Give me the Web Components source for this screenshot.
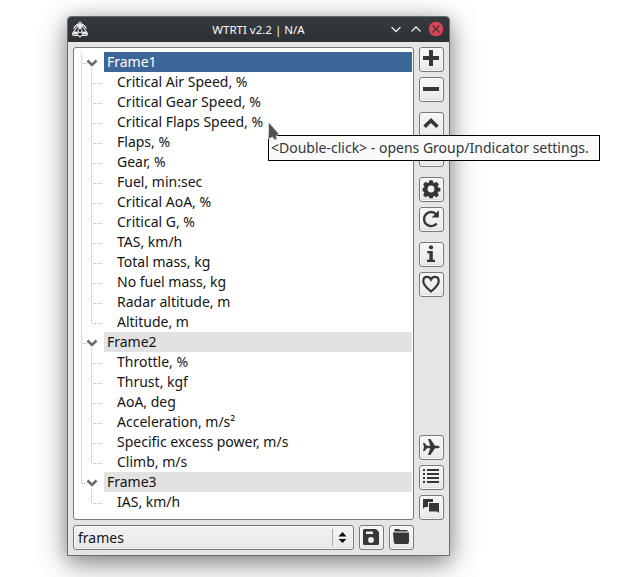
<!DOCTYPE html>
<html lang="en"><head><meta charset="utf-8"><title>WTRTI</title>
<style>
html,body{margin:0;width:622px;height:577px;overflow:hidden;background:#fff}
body{font:14px/20px "Noto Sans",sans-serif;color:#141414}
</style></head><body>
<wt-window caption="WTRTI v2.2 | N/A"></wt-window>
<wt-tooltip>&lt;Double-click&gt; - opens Group/Indicator settings.</wt-tooltip>
<script>
const define=(name,build)=>customElements.define(name,class extends HTMLElement{
  connectedCallback(){if(!this.shadowRoot)this.attachShadow({mode:'open'}).innerHTML=build(this);}
});
const icons={
 plus:'<path d="M10 3h4v6h6v4h-6v6h-4v-6H4V9h6z"/>',
 minus:'<path d="M4 10h16v4H4z"/>',
 up:'<path d="M4.3 13.6 12 6l7.7 7.6-2.6 2.5-5.1-5-5.1 5z"/>',
 down:'<path d="M4.3 9.4 12 17l7.7-7.6-2.6-2.5-5.1 5-5.1-5z"/>',
 gear:'<path fill-rule="evenodd" d="m10.3 4 3.4 0 .5 2.3 1.3.6 2-1.3 2.4 2.4-1.3 2 .5 1.3 2.3.4v3.4l-2.3.5-.5 1.2 1.3 2-2.4 2.4-2-1.3-1.3.5-.5 1.6h-3.4l-.5-1.6-1.3-.5-2 1.3L4.100 18.800l1.300-2-.5-1.200L3.600 15.100v-3.400l1.300-.4.5-1.300-1.300-2L6.500 5.600l2 1.300 1.300-.6zM12 9.400a3.400 3.400 0 1 0 0 6.800 3.400 3.400 0 1 0 0-6.800z" transform="translate(0 -.8)"/>',
 reload:'<path d="M17.3 7.200A7.100 7.100 0 1 0 17.700 16.500" fill="none" stroke="#363636" stroke-width="2.300"/><path d="M19.900 3.300v7.300h-7.300z"/>',
 info:'<circle cx="12" cy="5.300" r="2.100"/><path d="M8.200 9h5.600v8.700H16V20H8v-2.300h2.400V11.200H8.200z"/>',
 heart:'<path d="M12 19.500C8 16.200 4.300 12.700 4.300 9.200c0-5.600 5.800-5.500 7.700-1.700 1.900-3.800 7.700-3.900 7.700 1.700 0 3.500-3.700 7-7.700 10.300z" fill="none" stroke="#363636" stroke-width="2.200"/>',
 plane:'<path d="M4 8h1.600l2.300 2.800 3.400-.1L9 4h2.400l4.600 6.700h2.600c1.100 0 2 .5 2 1.300s-.9 1.300-2 1.300H16L11.400 20H9l2.300-6.700-3.400-.1L5.600 16H4l1-4z"/>',
 list:'<path d="M4 4h2v2H4zM8 4h12v2H8zM4 8h2v2H4zM8 8h12v2H8zM4 12h2v2H4zM8 12h12v2H8zM4 16h2v2H4zM8 16h12v2H8z"/>',
 chat:'<path d="M4 4h10v3H9v5H6l-2 2z"/><path d="M10 8h10v10l-2-1.500h-8z"/>',
 save:'<path fill-rule="evenodd" d="M5.500 4H17l3 3v11.500q0 1.500-1.500 1.500h-13Q4 20 4 18.500v-13Q4 4 5.500 4zM7 6.500V9h7V6.500zm5 5.500a2.900 2.900 0 1 0 0 5.800 2.900 2.900 0 1 0 0-5.800z"/>',
 folder:'<path d="M5.500 6V4H10l1 1h7.500v1.500h-13zM4 7.500h16V17q0 2-2 2H6.500q-1.500 0-1.700-2z"/>'
};
define('wt-button',e=>`<style>:host{display:block;box-sizing:border-box;width:25px;height:25px;border:1px solid #77797a;border-radius:3px;background:linear-gradient(#f7f7f7,#e9e9e9);box-shadow:inset 0 0 0 1px #f8f8f8,inset 0 -2px #dedede}svg{display:block;margin:-1px 0 0 -1px;fill:#363636}</style><svg width="25" height="25" viewBox="0 0 25 25">${icons[e.getAttribute('icon')]}</svg>`);

define('wt-titlebar',()=>`<style>
:host{display:grid;grid-template-columns:76px 1fr 76px;height:25px;align-items:center;background:linear-gradient(#353a3f,#2c3135);border-radius:3px 3px 0 0;color:#fcfcfc;font:11.500px/24px "Noto Sans",sans-serif;text-align:center}
svg{display:block}.controls{justify-self:end}.name{letter-spacing:0}</style>
<svg width="24" height="25" viewBox="0 0 24 25"><path d="M12 5c2 1 2.500 3 3 5l4.200 6q1 2-1.500 2.500l-3.700-.3L12 20l-2-1.800-3.700.3Q3.800 18 4.800 16L9 10c.5-2 1-4 3-5z" fill="#25292c" stroke="#eee" stroke-width="1.100"/><path d="M5.500 12q1-4 4.500-5M14 7q3.500 1 4.500 5M6 15h4v2H5.500zM14 15h4l.5 2H14zM10.600 7h2.800v4h-2.800z" fill="#eee" stroke="#eee" stroke-width=".9"/><circle cx="12" cy="13.500" r="2" fill="#25292c" stroke="#fff"/></svg>
<span class="name"><slot></slot></span>
<svg class="controls" width="62" height="25" viewBox="0 0 62 25"><g fill="none" stroke="#e8e8e8" stroke-width="1.250"><path d="m4.500 10 4.500 4.500 4.500-4.500M24.500 14.500 29 10l4.500 4.500"/></g><circle cx="49" cy="12" r="7.300" fill="#da4453"/><path d="m45.500 8.500 7 7m0-7-7 7" stroke="#31363b" stroke-width="1.200"/></svg>`);

define('wt-item',()=>`<style>:host{display:grid;grid-template-columns:12px 1fr;height:20px;line-height:20px;padding-left:17px;white-space:nowrap}
i{height:1px;margin:11px 0 0 1px;background:repeating-linear-gradient(90deg,transparent 0 1px,#bdbdbd 1px 2px)}span{padding-left:14px}</style><i></i><span><slot></slot></span>`);

define('wt-group',e=>`<style>:host{display:block}
.head{display:grid;grid-template-columns:30px 1fr;height:20px}
.mark{display:block}.name{background:#e2e2e2;padding-left:3px}
:host([selected]) .name{background:#3d6698;color:#fff}
.kids{display:block;background:repeating-linear-gradient(#bdbdbd 0 1px,transparent 1px 2px) 17px 0/1px calc(100% - 8px) no-repeat}
.wrap{background:repeating-linear-gradient(#bdbdbd 0 1px,transparent 1px 2px) 7px 0/1px ${e.hasAttribute('last')?'12px':'100%'} no-repeat}</style>
<div class="wrap"><div class="head"><svg class="mark" width="30" height="20"><path d="M8 11.500h5M17.500 16v4" stroke="#bdbdbd" stroke-dasharray="1 1"/><path d="m13.500 8.500 4.500 4.500 4.500-4.500" fill="none" stroke="#6b6b6b" stroke-width="2.600"/></svg><span class="name">${e.getAttribute('name')}</span></div><div class="kids"><slot></slot></div></div>`);

const groups=[['Frame1',['Critical Air Speed, %','Critical Gear Speed, %','Critical Flaps Speed, %','Flaps, %','Gear, %','Fuel, min:sec','Critical AoA, %','Critical G, %','TAS, km/h','Total mass, kg','No fuel mass, kg','Radar altitude, m','Altitude, m']],['Frame2',['Throttle, %','Thrust, kgf','AoA, deg','Acceleration, m/s²','Specific excess power, m/s','Climb, m/s']],['Frame3',['IAS, km/h']]];
define('wt-tree',()=>`<style>:host{display:block;box-sizing:border-box;border:1px solid #77797a;border-radius:3px;background:#fff;padding:4px 1px 0 0}</style>
${groups.map(([n,k],i)=>`<wt-group name="${n}" ${i==0?'selected':''} ${i==2?'last':''}>${k.map(t=>`<wt-item>${t}</wt-item>`).join('')}</wt-group>`).join('')}`);

define('wt-select',()=>`<style>:host{display:flex;box-sizing:border-box;height:25px;border:1px solid #77797a;border-radius:3px;background:linear-gradient(#f2f2f2,#e9e9e9);box-shadow:inset 0 0 0 1px #f5f5f5,inset 0 -2px #dedede;line-height:24px;padding-left:4px}span{flex:1}svg{display:block}</style><span><slot></slot></span><svg width="21" height="23"><path d="M.5 3v17" stroke="#aaa"/><path d="m10.500 6 4 4.500h-8zM10.500 17l4-4h-8z" fill="#111"/></svg>`);

define('wt-toolbar',()=>`<style>:host{display:flex;flex-direction:column;gap:5px}.gap{margin-top:5px}.end{margin-top:auto}</style>
${['plus','minus','up gap','down','gear gap','reload','info gap','heart','plane end','list','chat'].map(s=>{const[i,c='']=s.split(' ');return`<wt-button icon="${i}" class="${c}"></wt-button>`}).join('')}`);

define('wt-window',e=>`<style>:host{display:block;box-sizing:border-box;width:383px;height:540px;margin:16px 0 0 67px;border:1px solid #626c73;border-radius:4px 4px 0 0;background:#e5e5e5;box-shadow:0 8px 30px rgba(0,0,0,.38),0 4px 18px rgba(0,0,0,.22)}
.body{display:grid;grid-template-columns:341px 25px;grid-template-rows:473px 25px;gap:5px;padding:5px}.foot{display:grid;grid-template-columns:281px 25px 25px;gap:5px}</style>
<wt-titlebar>${e.getAttribute('caption')}</wt-titlebar><div class="body"><wt-tree></wt-tree><wt-toolbar></wt-toolbar><div class="foot"><wt-select>frames</wt-select><wt-button icon="save"></wt-button><wt-button icon="folder"></wt-button></div></div>`);

define('wt-tooltip',()=>`<style>:host{position:absolute;left:268px;top:135px;width:332px;height:26px;box-sizing:border-box;border:1px solid #000;background:#fafafa;color:#31363b;padding-left:2px;line-height:24px;white-space:nowrap}svg{position:absolute;left:-2px;top:-15px}</style><slot></slot><svg width="14" height="22"><path d="M1.500 1v17l4-2 2 3 2.500-1-1-3 3-2z" fill="#505255" stroke="#e6e6e6" stroke-width=".7"/></svg>`);
</script></body></html>
